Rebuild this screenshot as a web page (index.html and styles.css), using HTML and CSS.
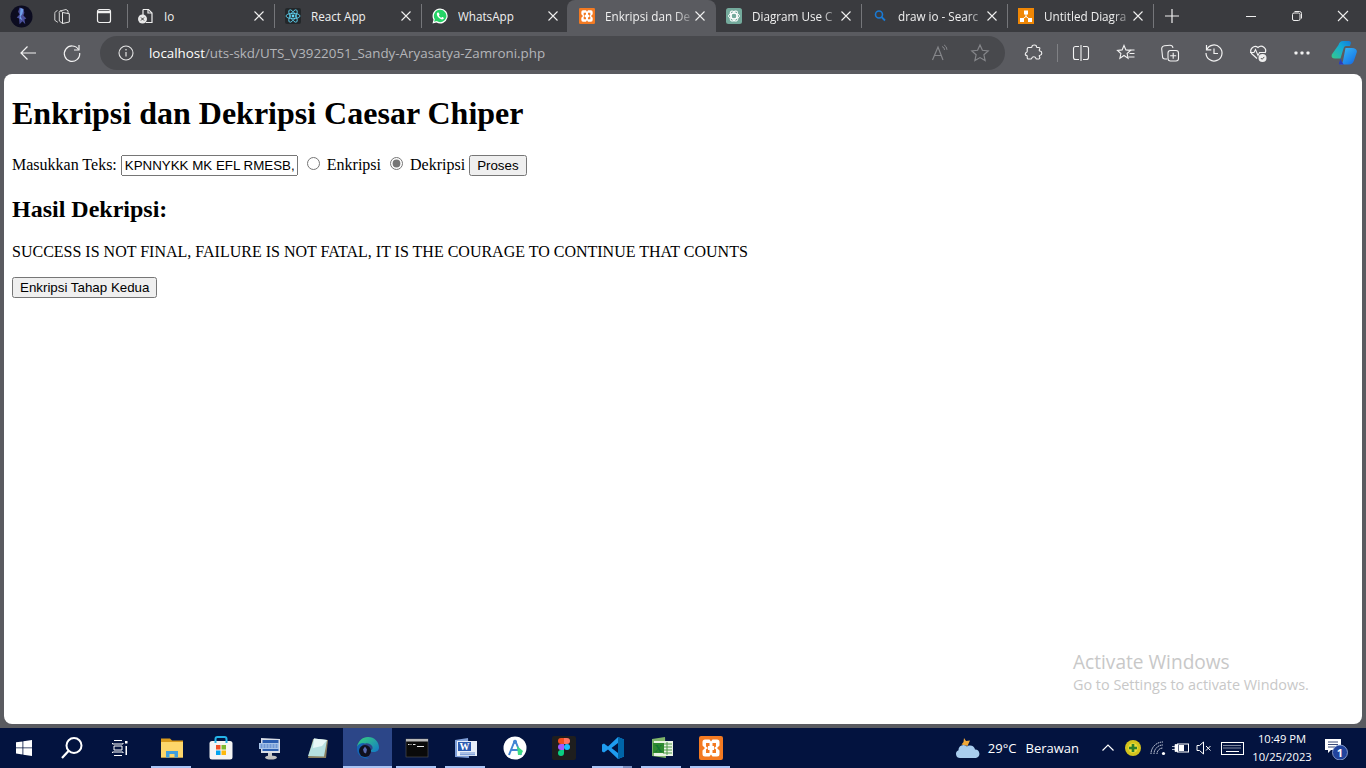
FILE: index.html
```html
<!DOCTYPE html>
<html lang="id">
<head>
<meta charset="utf-8">
<title>Enkripsi dan Dekripsi Caesar Chiper</title>
<link rel="stylesheet" href="styles.css">
</head>
<body>
<div class="tabstrip">
  <div class="strip-left">
    <span class="avatar"><svg width="23" height="23" viewBox="0 0 24 24"><circle cx="12" cy="12" r="11.500" fill="#0c0c20"/><path d="M10 2.500l4 1.500 1 4-1 3 3 3-2 1 1 5-3-3-3 3-.5-6-2.500-1 3-3-1.500-3z" fill="#4a4f9a"/><path d="M11 3l3 1.500-1 4.500-2 3 2 4-3-2 .5-5z" fill="#6f9fe8"/></svg></span>
    <span class="strip-btn"><svg class="ic16" viewBox="0 0 16 16"><path d="M8.500 4.500l6.800 1.200v8.300l-6.800 1.500z" fill="none" stroke="#e6e6e6" stroke-width="1"/><path d="M8.500 4.500C8 3 7 2.800 6 3l6-1.500 2 1.300v3M6 3C5 3.500 5 4.300 5.300 5v8l3.200 2.500" fill="none" stroke="#e6e6e6" stroke-width=".9"/><path d="M3.500 2.500l-2 1.200C1 4 .8 5 .8 5.500v6.800l3 2" fill="none" stroke="#e6e6e6" stroke-width=".9"/></svg></span>
    <span class="strip-btn"><svg class="ic16" viewBox="0 0 16 16"><rect x="1.500" y="1.500" width="13" height="13" rx="2" fill="none" stroke="#f0f0f0" stroke-width="1.200"/><path d="M2 4h12" stroke="#f0f0f0" stroke-width="2.500"/></svg></span>
  </div>
  <i class="tab-sep"></i>
  <div class="tab">
    <svg class="fav" viewBox="0 0 16 16"><path d="M5 1.500h5.500l3.500 3.500v9.500H8" fill="none" stroke="#eee" stroke-width="1.200"/><path d="M5 1.500V8M10 1.500V5h4" fill="none" stroke="#eee" stroke-width="1.200"/><circle cx="4.500" cy="11" r="4.500" fill="#e8e8e8"/><path d="M3 9.500l3 3M6 9.500l-3 3" stroke="#333" stroke-width="1"/></svg>
    <span class="tab-title">Io</span>
    <svg class="close" viewBox="0 0 12 12"><path d="M1.500 1.500l9 9M10.500 1.500l-9 9"/></svg>
  </div>
  <i class="tab-sep"></i>
  <div class="tab">
    <svg class="fav" viewBox="0 0 16 16"><rect width="16" height="16" rx="2" fill="#23272a"/><g fill="none" stroke="#61dafb" stroke-width=".8"><ellipse cx="8" cy="8" rx="7" ry="2.700"/><ellipse cx="8" cy="8" rx="7" ry="2.700" transform="rotate(60 8 8)"/><ellipse cx="8" cy="8" rx="7" ry="2.700" transform="rotate(120 8 8)"/></g><circle cx="8" cy="8" r="1.400" fill="#61dafb"/></svg>
    <span class="tab-title">React App</span>
    <svg class="close" viewBox="0 0 12 12"><path d="M1.500 1.500l9 9M10.500 1.500l-9 9"/></svg>
  </div>
  <i class="tab-sep"></i>
  <div class="tab">
    <svg class="fav" viewBox="0 0 16 16"><path d="M8 .5a7.500 7.500 0 0 0-6.500 11.200L.5 15.500l3.900-1A7.500 7.500 0 1 0 8 .5z" fill="#fff"/><path d="M8 1.800a6.200 6.200 0 0 0-5.200 9.500l-.7 2.500 2.600-.7A6.200 6.200 0 1 0 8 1.800z" fill="#25d366"/><path d="M5.800 4.500c-.4 0-1 .6-1 1.600 0 2.200 3 5.300 5.400 5.300 1 0 1.700-.7 1.700-1.300 0-.4-1.500-1.200-1.800-1.100l-.7.800c-1-.4-2-1.300-2.500-2.300l.6-.8c.1-.3-.6-2-1-2.200z" fill="#fff"/></svg>
    <span class="tab-title">WhatsApp</span>
    <svg class="close" viewBox="0 0 12 12"><path d="M1.500 1.500l9 9M10.500 1.500l-9 9"/></svg>
  </div>
  <div class="tab tab-active">
    <svg class="fav" viewBox="0 0 24 24"><rect width="24" height="24" rx="2" fill="#f37a22"/><path d="M6 3.500h4.500l1.500 2 1.500-2H18a2.500 2.500 0 0 1 2.500 2.500v3.500L18 12l2.500 2.500V18a2.500 2.500 0 0 1-2.500 2.500h-4.500l-1.500-2-1.500 2H6A2.500 2.500 0 0 1 3.500 18v-3.500L6 12 3.500 9.500V6A2.500 2.500 0 0 1 6 3.500z" fill="#fff"/><path d="M7 7h3.500v3H9v4h1.500v3H7v-3.500L9 12 7 10.500zM17 7h-3.500v3H15v4h-1.500v3H17v-3.500L15 12l2-1.500z" fill="#f37a22"/></svg>
    <span class="tab-title tab-fade">Enkripsi dan De</span>
    <svg class="close" viewBox="0 0 12 12"><path d="M1.500 1.500l9 9M10.500 1.500l-9 9"/></svg>
  </div>
  <div class="tab tab-narrow">
    <svg class="fav" viewBox="0 0 16 16"><rect width="16" height="16" rx="2.500" fill="#74aa9c"/><g fill="none" stroke="#fff" stroke-width=".9"><circle cx="8" cy="8" r="3"/><ellipse cx="8" cy="8" rx="5.500" ry="2.800"/><ellipse cx="8" cy="8" rx="5.500" ry="2.800" transform="rotate(60 8 8)"/><ellipse cx="8" cy="8" rx="5.500" ry="2.800" transform="rotate(120 8 8)"/></g></svg>
    <span class="tab-title tab-fade">Diagram Use C</span>
    <svg class="close" viewBox="0 0 12 12"><path d="M1.500 1.500l9 9M10.500 1.500l-9 9"/></svg>
  </div>
  <i class="tab-sep"></i>
  <div class="tab tab-narrow">
    <svg class="fav" viewBox="0 0 16 16"><circle cx="7" cy="6.500" r="3.500" fill="none" stroke="#1a7ad4" stroke-width="1.600"/><path d="M9.500 9l3.500 3.500" stroke="#1a7ad4" stroke-width="1.800"/></svg>
    <span class="tab-title tab-fade">draw io - Searc</span>
    <svg class="close" viewBox="0 0 12 12"><path d="M1.500 1.500l9 9M10.500 1.500l-9 9"/></svg>
  </div>
  <i class="tab-sep"></i>
  <div class="tab tab-narrow">
    <svg class="fav" viewBox="0 0 16 16"><rect width="16" height="16" fill="#f08705"/><path d="M8 6v3M8 8.500l-4 3M8 8.500l4 3" stroke="#fff" stroke-width="1"/><rect x="6" y="2.500" width="4" height="4" fill="#fff"/><rect x="2" y="10" width="4" height="4" fill="#fff"/><rect x="10" y="10" width="4" height="4" fill="#fff"/></svg>
    <span class="tab-title tab-fade">Untitled Diagra</span>
    <svg class="close" viewBox="0 0 12 12"><path d="M1.500 1.500l9 9M10.500 1.500l-9 9"/></svg>
  </div>
  <i class="tab-sep"></i>
  <span class="new-tab"><svg class="ic16" viewBox="0 0 16 16"><path d="M8 1v14M1 8h14" stroke="#f0f0f0" stroke-width="1.200"/></svg></span>
  <div class="win-btns">
    <span class="win-btn"><svg class="ic12" viewBox="0 0 12 12"><path d="M1 6.500h10" stroke="#eee"/></svg></span>
    <span class="win-btn"><svg class="ic12" viewBox="0 0 12 12"><rect x="1.500" y="3" width="7.500" height="7.500" rx="1.500" fill="none" stroke="#eee"/><path d="M3.500 1.500h5a2 2 0 0 1 2 2v5" fill="none" stroke="#eee"/></svg></span>
    <span class="win-btn"><svg class="ic12" viewBox="0 0 12 12"><path d="M1 1l10 10M11 1L1 11" stroke="#eee" stroke-width="1.100"/></svg></span>
  </div>
</div>

<div class="toolbar">
  <span class="tool"><svg class="ic20" viewBox="0 0 20 20"><path d="M18 10H3M9.500 3.500L3 10l6.500 6.500" fill="none" stroke="#f2f2f2" stroke-width="1.200"/></svg></span>
  <span class="tool"><svg class="ic20" viewBox="0 0 20 20"><path d="M16.500 6.500A7.700 7.700 0 1 0 17.700 10" fill="none" stroke="#f2f2f2" stroke-width="1.200"/><path d="M17 2v5h-5" fill="none" stroke="#f2f2f2" stroke-width="1.200"/></svg></span>
  <div class="address">
    <svg class="info" viewBox="0 0 16 16"><circle cx="8" cy="8" r="7" fill="none" stroke="#e4e4e4" stroke-width="1.100"/><path d="M8 7v4.500" stroke="#e4e4e4" stroke-width="1.200"/><circle cx="8" cy="4.800" r=".8" fill="#e4e4e4"/></svg>
    <span class="url"><b class="url-host">localhost</b>/uts-skd/UTS_V3922051_Sandy-Aryasatya-Zamroni.php</span>
    <span class="addr-ic addr-read"><svg class="ic20" viewBox="0 0 20 20"><path d="M2.500 17L8 4l5 13M4.500 12.500h7" fill="none" stroke="#85868a" stroke-width="1.200"/><path d="M12 3.500a3.500 3.500 0 0 1 2.500 3.500M14 1.800a6 6 0 0 1 3 5" fill="none" stroke="#85868a"/></svg></span>
    <span class="addr-ic"><svg class="ic20" viewBox="0 0 20 20"><path d="M10 2l2.400 5.300 5.800.6-4.300 3.900 1.200 5.700L10 14.600l-5.100 2.900 1.200-5.700L1.800 7.900l5.800-.6z" fill="none" stroke="#85868a" stroke-width="1.200"/></svg></span>
  </div>
  <span class="tool tool-ext"><svg class="ic20" viewBox="0 0 20 20"><path d="M8 3.500C8 2.500 9 2 10.300 2c1.300 0 2.200.7 2.200 1.700 0 .5.300.8.800.8h1.500c.8 0 1.200.5 1 1.200l-.5 1.300c-.2.600.1 1 .7 1 1 .1 1.800 1 1.800 2.200 0 1.200-.8 2-1.800 2.100-.6 0-.9.500-.7 1l.5 1.200c.2.800-.3 1.500-1.100 1.500h-2c-.5 0-.8-.3-.9-.8-.2-.9-1-1.500-2-1.500s-1.800.6-2 1.500c-.1.500-.4.800-.9.800H4.500c-.8 0-1.300-.6-1.300-1.300v-1.500c0-.5-.3-.8-.7-1C1.600 12.700 1.200 11.900 1.300 11c.1-1 .6-1.600 1.300-1.800.4-.1.600-.5.600-.9V6c0-.9.500-1.500 1.300-1.500H7c.6 0 1-.3 1-1z" fill="none" stroke="#f2f2f2" stroke-width="1.100"/></svg></span>
  <i class="tool-sep"></i>
  <span class="tool tool-split"><svg class="ic20" viewBox="0 0 20 20"><path d="M8 3.500H4.500a2 2 0 0 0-2 2v9a2 2 0 0 0 2 2H8M12 3.500h3.500a2 2 0 0 1 2 2v9a2 2 0 0 1-2 2H12M10 2v16" fill="none" stroke="#f2f2f2" stroke-width="1.100"/></svg></span>
  <span class="tool"><svg class="ic20" viewBox="0 0 20 20"><path d="M8 2.500l1.900 4.400 4.600.5-3.400 3.100 1 4.700L8 12.500l-4.100 2.700 1-4.700-3.400-3.100 4.600-.5z" fill="none" stroke="#f2f2f2" stroke-width="1.100"/><path d="M13.500 7h5M13.500 10.500h5M12.500 14h6" stroke="#f2f2f2" stroke-width="1.100"/></svg></span>
  <span class="tool"><svg class="ic20" viewBox="0 0 20 20"><path d="M7 16H5A2.500 2.500 0 0 1 2.500 13.500L1.700 6a3 3 0 0 1 2.700-3.300L10 2.300a3 3 0 0 1 3 2.500" fill="none" stroke="#f2f2f2" stroke-width="1.100"/><rect x="8" y="7.500" width="10.500" height="10.500" rx="2.500" fill="#5a5b60" stroke="#f2f2f2" stroke-width="1.100"/><path d="M13.200 9.800v6M10.200 12.800h6" stroke="#f2f2f2" stroke-width="1.100"/></svg></span>
  <span class="tool"><svg class="ic20" viewBox="0 0 20 20"><path d="M2.800 6.500A8 8 0 1 1 2 10" fill="none" stroke="#f2f2f2" stroke-width="1.200"/><path d="M2.500 2v4.800h4.800M10 5.500V10.500h4" fill="none" stroke="#f2f2f2" stroke-width="1.200"/></svg></span>
  <span class="tool"><svg class="ic20" viewBox="0 0 20 20"><path d="M9 15.500L3.500 10.500A4.500 4.500 0 0 1 10 4.500a4.500 4.500 0 0 1 7 5.500" fill="none" stroke="#f2f2f2" stroke-width="1.200"/><path d="M2 9.500h4l1.500-3 2.500 6 1.500-3h6" fill="none" stroke="#f2f2f2" stroke-width="1.100"/><circle cx="14.500" cy="15" r="4" fill="#eee"/><path d="M12.800 15l1.300 1.300 2.200-2.400" fill="none" stroke="#555" stroke-width="1"/></svg></span>
  <span class="tool"><svg class="ic20" viewBox="0 0 20 20"><rect x="2.500" y="8.500" width="3" height="3" rx=".8" fill="#f2f2f2"/><rect x="8.500" y="8.500" width="3" height="3" rx=".8" fill="#f2f2f2"/><rect x="14.500" y="8.500" width="3" height="3" rx=".8" fill="#f2f2f2"/></svg></span>
  <span class="copilot"><svg class="ic26" viewBox="0 0 26 24"><defs><linearGradient id="cpa" x1="0" y1="1" x2="1" y2="0"><stop offset="0" stop-color="#37c98a"/><stop offset=".6" stop-color="#12a9d6"/><stop offset="1" stop-color="#1478d8"/></linearGradient><linearGradient id="cpb" x1="0" y1="0" x2="1" y2="1"><stop offset="0" stop-color="#3cc0f5"/><stop offset=".7" stop-color="#1d84ea"/><stop offset="1" stop-color="#1d5ad8"/></linearGradient><linearGradient id="cpc" x1="0" y1="0" x2="1" y2="1"><stop offset="0" stop-color="#1d4fc0"/><stop offset="1" stop-color="#3a2fb0"/></linearGradient></defs><path d="M7.500 4C8.300 1.500 9.800 0 12 0h5.500c2 0 2.800 1.200 2.300 2.500L19 5h-4c-1.500 0-2 1-2.500 2.500L9.500 17.500H4C1.200 17.500 0 16 .8 13.500z" fill="url(#cpa)"/><path d="M14.500 7H21c3.500 0 5.500 2 4.700 4.500L23 19.500c-.8 2.500-2.500 4-5 4h-6l-3.800 0c2 0 3-1 3.800-3.500z" fill="url(#cpb)"/><path d="M9.500 17.500L8 22c-.3 1 .3 1.500 1 1.500h4c-1.500-1-2.500-3.500-3.500-6z" fill="url(#cpc)"/></svg></span>
</div>

<main class="page">
  <div class="doc">
    <h1>Enkripsi dan Dekripsi Caesar Chiper</h1>
    <form class="cipher-form">
      <label for="teks">Masukkan Teks:</label>
      <input type="text" class="text-input" id="teks" value="KPNNYKK MK EFL RMESB,">
      <input type="radio" class="radio" name="mode" id="enk">
      <label for="enk">Enkripsi</label>
      <input type="radio" class="radio" name="mode" id="dek" checked>
      <label for="dek">Dekripsi</label>
      <input type="button" value="Proses">
    </form>
    <h2>Hasil Dekripsi:</h2>
    <p>SUCCESS IS NOT FINAL, FAILURE IS NOT FATAL, IT IS THE COURAGE TO CONTINUE THAT COUNTS</p>
    <input type="button" value="Enkripsi Tahap Kedua">
  </div>
  <div class="watermark">
    <div class="wm-title">Activate Windows</div>
    <div class="wm-sub">Go to Settings to activate Windows.</div>
  </div>
</main>

<footer class="taskbar">
  <span class="sys-btn"><svg class="ic16" viewBox="0 0 16 16"><path d="M0 2.300l6.500-.9v6.100H0zM7.300 1.300L16 0v7.500H7.300zM0 8.300h6.500v6.200L0 13.600zM7.300 8.300H16V16l-8.700-1.300z" fill="#fff"/></svg></span>
  <span class="sys-btn"><svg class="ic24" viewBox="0 0 24 24"><circle cx="14" cy="9.500" r="7.500" fill="none" stroke="#fff" stroke-width="2"/><path d="M8.500 15L2 22" stroke="#fff" stroke-width="2.200"/></svg></span>
  <span class="sys-btn"><svg class="ic16" viewBox="0 0 16 16"><path d="M2 .5h8M2 15.500h8M.5 3v1h10.500V3M.5 13v-1h10.500v1M2 6h8v4H2z" fill="none" stroke="#fff"/><rect x="13" y="1" width="2.500" height="2.500" fill="#fff"/><rect x="13.500" y="6" width="1.500" height="9" fill="#fff"/></svg></span>
  <div class="apps">
    <span class="app app-open"><svg class="ic24" viewBox="0 0 24 24"><path d="M1 2.500h9l2 2h11v17H1z" fill="#d99a1c"/><rect x="1" y="6" width="22" height="15.500" fill="#fdd66b"/><path d="M6 21.500V15h12v6.500h-3.500V18h-5v3.500z" fill="#3f9fe0"/></svg></span>
    <span class="app"><svg class="ic24" viewBox="0 0 24 24"><rect x="0.500" y="5" width="23" height="18.500" rx="2.500" fill="#f4f4f4"/><path d="M6.500 7V3a2 2 0 0 1 2-2h7a2 2 0 0 1 2 2v4" fill="none" stroke="#25b4e8" stroke-width="2"/><rect x="7" y="9" width="4.500" height="4.500" fill="#f15025"/><rect x="12.500" y="9" width="4.500" height="4.500" fill="#7cb82f"/><rect x="7" y="14.500" width="4.500" height="4.500" fill="#02a4ef"/><rect x="12.500" y="14.500" width="4.500" height="4.500" fill="#fdb90d"/></svg></span>
    <span class="app"><svg class="ic24" viewBox="0 0 24 24"><path d="M3 2l19 1v14H3z" fill="#d8dde6"/><rect x="4.500" y="4" width="16" height="11" fill="#2a5db0"/><rect x="1" y="7" width="20" height="6" fill="#a8c4e8"/><path d="M2.500 9h17M2.500 11h17" stroke="#3a6ec0" stroke-dasharray="2 1"/><path d="M12 17v3" stroke="#c8c8c8" stroke-width="4"/><ellipse cx="13" cy="21.500" rx="6" ry="2" fill="#c2c2c2"/></svg></span>
    <span class="app"><svg class="ic24" viewBox="0 0 24 24"><path d="M6 3l15 1-2 18H1z" fill="#8a7f60"/><path d="M7 2.500l13 1.500-3 16.500L1 20z" fill="#b6e0e0"/><path d="M7 2.500l13 1.500-5 6-9 2z" fill="#e8f7f6"/></svg></span>
    <span class="app app-active"><svg class="ic24" viewBox="0 0 24 24"><defs><linearGradient id="eda" x1="0" y1="0" x2="1" y2="1"><stop offset="0" stop-color="#38d27c"/><stop offset="1" stop-color="#1278c8"/></linearGradient></defs><path d="M1 11C2 5 6.500 1 12 1c6.500 0 11 5 11 10.500 0 3-2.500 4.500-5 4.500-2 0-3.500-.5-4-1.500 3-.5 3-3 2-4.500-1.500-2-4-3-6.500-2.500C5 8 2.500 9 1 11z" fill="url(#eda)"/><path d="M1 11c1-3 5-4.500 8-3.800-2.500 1-4 3.300-4 6 0 4 3 7.500 8 9-7 1.500-13-4-12-11.200z" fill="#1363b4"/><circle cx="9" cy="15" r="6" fill="#10101e"/><path d="M9 10.500l2 3-1 4-2-1-1-3z" fill="#5a6ab0"/></svg></span>
    <span class="app app-open"><svg class="ic24" viewBox="0 0 24 24"><rect x="1" y="3" width="22" height="18" fill="#0a0a0a" stroke="#555" stroke-width=".6"/><rect x="1" y="3" width="22" height="2.500" fill="#b8b8b8"/><path d="M3 8.500h1.500M5.500 8.500h1M8 8.500h2.500M12 10.500h7" stroke="#e6e6e6" stroke-width="1"/></svg></span>
    <span class="app app-open"><svg class="ic24" viewBox="0 0 24 24"><path d="M1 4l13-2 1 20-14-1z" fill="#7f9fd8"/><rect x="3" y="5" width="20" height="15" fill="#e8eef8"/><rect x="4" y="6" width="13" height="9" fill="#2b5ab0"/><text x="10.500" y="14" class="ic-letter">W</text><path d="M6 17h15M6 18.700h15" stroke="#6a8fd0"/></svg></span>
    <span class="app"><svg class="ic24" viewBox="0 0 24 24"><circle cx="12" cy="12" r="11.500" fill="#fff"/><path d="M12 4L6 19M12 4l6 15M8 14h8" fill="none" stroke="#4285d4" stroke-width="2"/><path d="M14 10l6 5-2 4h-3z" fill="#3ddc84"/><circle cx="12" cy="6" r="2" fill="#4285d4"/></svg></span>
    <span class="app"><svg class="ic24" viewBox="0 0 24 24"><rect width="24" height="24" rx="2" fill="#1e1e1e"/><path d="M6 5a3 3 0 0 1 3-3h3v6H9a3 3 0 0 1-3-3z" fill="#f24e1e"/><path d="M12 2h3a3 3 0 0 1 0 6h-3z" fill="#ff7262"/><path d="M9 8h3v6H9a3 3 0 0 1 0-6z" fill="#a259ff"/><circle cx="15" cy="11" r="3" fill="#1abcfe"/><path d="M9 14h3v3a3 3 0 1 1-3-3z" fill="#0acf83"/></svg></span>
    <span class="app app-open app-stack"><svg class="ic24" viewBox="0 0 24 24"><path d="M17 1L7 10.500 3 7.500 1 8.500v7l2 1 4-3L17 23l6-2.500V3.500zM17 7v10l-6.500-5z" fill="#1f9cf0"/><path d="M17 1l6 2.500v17L17 23z" fill="#0065a9"/></svg></span>
    <span class="app app-open"><svg class="ic24" viewBox="0 0 24 24"><path d="M2 3l13-2 1 21-14-2z" fill="#7fb56a"/><rect x="4" y="5" width="19" height="15" fill="#eaf4e4"/><path d="M13 8h9M13 11h9M13 14h9M13 17h9M17 6v13" stroke="#4f9a48"/><rect x="3" y="7" width="11" height="10" fill="#2f8a2f"/><text x="8.500" y="15.500" class="ic-letter ic-dark">X</text></svg></span>
    <span class="app app-open"><svg class="ic24" viewBox="0 0 24 24"><rect width="24" height="24" rx="2" fill="#f37a22"/><path d="M6 3.500h4.500l1.500 2 1.500-2H18a2.500 2.500 0 0 1 2.500 2.500v3.500L18 12l2.500 2.500V18a2.500 2.500 0 0 1-2.500 2.500h-4.500l-1.500-2-1.500 2H6A2.500 2.500 0 0 1 3.500 18v-3.500L6 12 3.500 9.500V6A2.500 2.500 0 0 1 6 3.500z" fill="#fff"/><path d="M7 7h3.500v3H9v4h1.500v3H7v-3.500L9 12 7 10.500zM17 7h-3.500v3H15v4h-1.500v3H17v-3.500L15 12l2-1.500z" fill="#f37a22"/></svg></span>
  </div>
  <div class="tray">
    <span class="weather"><svg class="ic26" viewBox="0 0 26 26"><path d="M9 3l2 3 4-.5-2.500 5.500-6-1.500L8.500 7z" fill="#f0a83a"/><path d="M5 23a4 4 0 0 1-1.500-7.700A5 5 0 0 1 12 11.500a5 5 0 0 1 8 3 4.300 4.300 0 0 1 1 8.500z" fill="#a9cdee"/></svg></span>
    <span class="temp">29°C</span>
    <span class="cond">Berawan</span>
    <svg class="tray-chev" viewBox="0 0 12 12"><path d="M0.500 8.500L6 3l5.500 5.500" fill="none" stroke="#fff" stroke-width="1.200"/></svg>
    <svg class="tray-sec" viewBox="0 0 16 16"><circle cx="8" cy="8" r="8" fill="#d3c31c"/><circle cx="8" cy="8" r="4.800" fill="#e9dd3c"/><path d="M8 4v8M4 8h8" stroke="#2d7f2a" stroke-width="2.600"/></svg>
    <svg class="tray-wifi" viewBox="0 0 16 16"><path d="M1 14A12 12 0 0 1 13 2M4 14a9 9 0 0 1 9-9M7 14a6 6 0 0 1 6-6" fill="none" stroke="#dfe4ef" stroke-dasharray="1.500 .7"/><circle cx="13.500" cy="13.500" r="1.600" fill="#fff"/></svg>
    <svg class="tray-batt" viewBox="0 0 18 16"><rect x="5.500" y="4" width="11" height="8" fill="none" stroke="#fff"/><rect x="7" y="5" width="5" height="6" fill="#fff"/><path d="M0 6.500h3M0 9.500h3M3 4.500h3v7H3z" fill="#fff" stroke="#fff" stroke-width=".7"/></svg>
    <svg class="tray-vol" viewBox="0 0 16 16"><path d="M1 5.500h2.500L7.500 2v12l-4-3.500H1z" fill="none" stroke="#fff"/><path d="M10 6l4.500 4.500M14.500 6L10 10.500" stroke="#fff"/></svg>
    <svg class="tray-kbd" viewBox="0 0 23 13"><rect x=".5" y=".5" width="22" height="12" fill="none" stroke="#fff"/><path d="M2.500 3.500h18M2.500 6h18" stroke="#fff" stroke-dasharray="1 1"/><path d="M5 9.500h13" stroke="#fff"/></svg>
    <div class="clock"><span>10:49 PM</span><span>10/25/2023</span></div>
    <span class="notif"><svg class="ic24" viewBox="0 0 24 24"><path d="M1 3h16v11H7l-3 3v-3H1z" fill="#fff"/><path d="M4 6h10M4 8.500h10M4 11h7" stroke="#3a4a78"/><circle cx="16" cy="16.500" r="7.500" fill="#21439c" stroke="#9fb2dc" stroke-width=".8"/><text x="16" y="20.500" class="ic-num">1</text></svg></span>
  </div>
</footer>
</body>
</html>
```
FILE: styles.css
```css
* { box-sizing: border-box; }
html, body { height: 100%; }
body {
  margin: 0;
  height: 768px;
  overflow: hidden;
  display: flex;
  flex-direction: column;
  background: #5a5b60;
  font-family: "Liberation Serif", serif;
}
svg { display: block; flex: none; }
.ic12 { width: 12px; height: 12px; }
.ic16 { width: 16px; height: 16px; }
.ic20 { width: 20px; height: 20px; }
.ic24 { width: 24px; height: 24px; }
.ic26 { width: 26px; height: 26px; }

/* tab strip */
.tabstrip {
  height: 32px;
  flex: none;
  display: flex;
  align-items: stretch;
  background: #3a3b3f;
  font-family: "Open Sans", sans-serif;
  font-size: 11.700px;
  color: #f0f0f0;
}
.strip-left { width: 127px; display: flex; align-items: center; padding-left: 10px; }
.avatar { width: 23px; height: 23px; margin-right: 9px; }
.strip-btn { width: 42px; display: flex; justify-content: center; padding-right: 2px; }
.tab-sep { width: 1px; height: 24px; margin-top: 4px; background: #75767a; flex: none; }
.tab {
  width: 146px;
  flex: none;
  display: flex;
  align-items: center;
  gap: 10px;
  padding: 0 9px 0 10px;
}
.tab-narrow { width: 145px; }
.tab-active {
  width: 149px;
  margin-left: -1px;
  padding: 0 10px 0 12px;
  background: #5a5b60;
  border-radius: 8px 8px 0 0;
}
.fav { width: 16px; height: 16px; }
.tab-title { flex: 1; min-width: 0; margin-right: -8px; white-space: nowrap; overflow: hidden; }
.tab-fade {
  -webkit-mask-image: linear-gradient(90deg, #000 80%, rgba(0, 0, 0, .2) 100%);
  mask-image: linear-gradient(90deg, #000 80%, rgba(0, 0, 0, .2) 100%);
}
.close { width: 12px; height: 12px; fill: none; stroke: #f0f0f0; stroke-width: 1.100; }
.new-tab { width: 36px; display: flex; align-items: center; justify-content: center; }
.win-btns { margin-left: auto; display: flex; }
.win-btn { width: 46px; display: flex; align-items: center; justify-content: center; }

/* toolbar */
.toolbar {
  height: 42px;
  flex: none;
  display: flex;
  align-items: center;
  padding-left: 6px;
  background: #5a5b60;
}
.tool { width: 44px; height: 34px; display: flex; align-items: center; justify-content: center; flex: none; }
.tool-ext { margin-left: 7px; }
.tool-sep { width: 1px; height: 18px; margin-left: 1px; background: #808185; flex: none; }
.tool-split { margin: 0 1px; }
.address {
  width: 905px;
  height: 34px;
  margin-left: 6px;
  flex: none;
  display: flex;
  align-items: center;
  padding: 0 15px 0 18px;
  border-radius: 17px;
  background: #48494d;
  font-family: "Open Sans", sans-serif;
}
.info { width: 16px; height: 16px; margin-right: 15px; }
.url { flex: 1; font-size: 13.370px; color: #b4b5b9; white-space: nowrap; }
.url-host { color: #fff; font-weight: 400; }
.addr-ic { width: 20px; display: flex; justify-content: center; }
.addr-read { margin-right: 20px; }
.copilot { width: 40px; display: flex; justify-content: center; }

/* page */
.page {
  position: relative;
  flex: none;
  height: 650px;
  margin: 0 4px;
  background: #fff;
  border-radius: 8px;
  overflow: hidden;
  color: #000;
}
.doc { margin: 8px; font-size: 16px; }
.text-input { width: 177px; }
.radio { accent-color: #767676; }
.watermark {
  position: absolute;
  left: 1069px;
  top: 575px;
  color: #c8c8c8;
  font-family: "Open Sans", sans-serif;
}
.wm-title { font-size: 19.100px; line-height: 26px; }
.wm-sub { font-size: 14.400px; line-height: 20px; }

/* taskbar */
.taskbar {
  height: 40px;
  flex: none;
  margin-top: 4px;
  display: flex;
  align-items: center;
  background: #03133f;
  color: #fff;
  font-family: "Open Sans", sans-serif;
}
.sys-btn { width: 48px; height: 40px; display: flex; align-items: center; justify-content: center; flex: none; }
.apps { display: flex; margin-left: 3px; }
.app {
  position: relative;
  width: 49px;
  height: 40px;
  display: flex;
  align-items: center;
  justify-content: center;
  flex: none;
}
.app-open::after {
  content: "";
  position: absolute;
  left: 4px;
  right: 5px;
  bottom: 0;
  height: 2px;
  background: #a9c4f5;
}
.app-active { background: #2c4688; }
.app-active::after {
  content: "";
  position: absolute;
  left: 0;
  right: 0;
  bottom: 0;
  height: 2px;
  background: #a9c4f5;
}
.app-stack::before {
  content: "";
  position: absolute;
  right: 5px;
  bottom: 0;
  width: 9px;
  height: 2px;
  background: #7a8fc0;
  z-index: 1;
}
.ic-letter { font: 700 10px "Liberation Serif", serif; fill: #fff; text-anchor: middle; }
.ic-dark { fill: #173; font-size: 11px; }
.ic-num { font: 700 11px "Open Sans", sans-serif; fill: #fff; text-anchor: middle; }
.tray { margin-left: auto; display: flex; align-items: center; height: 40px; font-size: 13px; }
.weather { margin-right: 7px; }
.temp { margin-right: 9px; }
.cond { margin-right: 23px; }
.tray-chev { width: 12px; height: 12px; margin-right: 11px; }
.tray-sec { width: 16px; height: 16px; margin-right: 9px; }
.tray-wifi { width: 16px; height: 16px; margin-right: 6px; }
.tray-batt { width: 18px; height: 16px; margin-right: 6px; }
.tray-vol { width: 16px; height: 16px; margin-right: 9px; }
.tray-kbd { width: 23px; height: 13px; margin-right: 2px; }
.clock {
  width: 72px;
  display: flex;
  flex-direction: column;
  align-items: center;
  font-size: 11.200px;
  line-height: 18px;
}
.notif { width: 48px; display: flex; justify-content: center; padding-right: 12px; }
```
